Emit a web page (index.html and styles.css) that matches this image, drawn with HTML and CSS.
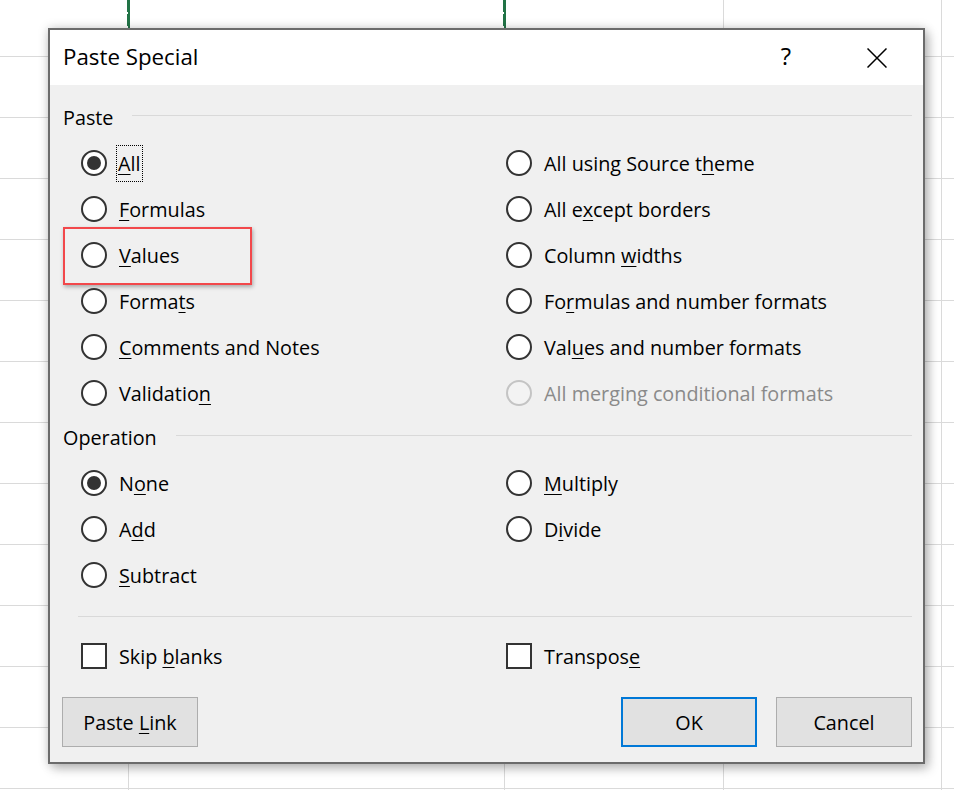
FILE: index.html
```html
<!DOCTYPE html>
<html lang="en">
<head>
<meta charset="utf-8">
<title>Paste Special</title>
<link rel="stylesheet" href="styles.css">
</head>
<body>
<div class="dialog">
  <div class="titlebar">
    <span class="title">Paste Special</span>
    <span class="help">?</span>
    <svg class="close" width="20" height="20" viewBox="0 0 20 20"><path d="M0.5 0.5 L19.5 19.5 M19.5 0.5 L0.5 19.5" stroke="#000" stroke-width="1.5" fill="none"/></svg>
  </div>
  <div class="content">
    <div class="group-head"><span>Paste</span><i class="rule"></i></div>
    <div class="options">
      <label class="opt"><span class="radio checked"></span><span class="focus"><u>A</u>ll</span></label>
      <label class="opt"><span class="radio"></span><span>All using Source t<u>h</u>eme</span></label>
      <label class="opt"><span class="radio"></span><span><u>F</u>ormulas</span></label>
      <label class="opt"><span class="radio"></span><span>All e<u>x</u>cept borders</span></label>
      <label class="opt highlight"><span class="radio"></span><span><u>V</u>alues</span></label>
      <label class="opt"><span class="radio"></span><span>Column <u>w</u>idths</span></label>
      <label class="opt"><span class="radio"></span><span>Forma<u>t</u>s</span></label>
      <label class="opt"><span class="radio"></span><span>Fo<u>r</u>mulas and number formats</span></label>
      <label class="opt"><span class="radio"></span><span><u>C</u>omments and Notes</span></label>
      <label class="opt"><span class="radio"></span><span>Val<u>u</u>es and number formats</span></label>
      <label class="opt"><span class="radio"></span><span>Validatio<u>n</u></span></label>
      <label class="opt disabled"><span class="radio"></span><span>All mer<u>g</u>ing conditional formats</span></label>
    </div>
    <div class="group-head op-head"><span>Operation</span><i class="rule"></i></div>
    <div class="options">
      <label class="opt"><span class="radio checked"></span><span>N<u>o</u>ne</span></label>
      <label class="opt"><span class="radio"></span><span><u>M</u>ultiply</span></label>
      <label class="opt"><span class="radio"></span><span>A<u>d</u>d</span></label>
      <label class="opt"><span class="radio"></span><span>D<u>i</u>vide</span></label>
      <label class="opt"><span class="radio"></span><span><u>S</u>ubtract</span></label>
    </div>
    <div class="separator"></div>
    <div class="options checks">
      <label class="opt"><span class="checkbox"></span><span>Skip <u>b</u>lanks</span></label>
      <label class="opt"><span class="checkbox"></span><span>Transpos<u>e</u></span></label>
    </div>
    <div class="buttons">
      <button class="btn">Paste <u>L</u>ink</button>
      <button class="btn primary">OK</button>
      <button class="btn">Cancel</button>
    </div>
  </div>
</div>
</body>
</html>
```
FILE: styles.css
```css
html, body {
  margin: 0;
  padding: 0;
}
body {
  width: 954px;
  height: 790px;
  overflow: hidden;
  box-sizing: border-box;
  padding: 28px 0 0 48px;
  font-family: "Open Sans", "Noto Sans", sans-serif;
  color: #000;
  background-color: #fff;
  background-image:
    repeating-linear-gradient(to bottom, #217346 0 12px, #ffffff 12px 14px),
    linear-gradient(#217346, #217346),
    repeating-linear-gradient(to bottom, #217346 0 12px, #ffffff 12px 14px),
    linear-gradient(#217346, #217346),
    linear-gradient(#dadada, #dadada),
    linear-gradient(#dadada, #dadada),
    linear-gradient(#dadada, #dadada),
    linear-gradient(#dadada, #dadada),
    linear-gradient(to bottom, #dadada 1px, transparent 1px);
  background-size:
    1px 56px,
    2px 56px,
    1px 56px,
    2px 56px,
    1px 100%,
    1px 100%,
    1px 100%,
    1px 100%,
    100% 61px;
  background-position:
    127px 0,
    128px 0,
    503px 0,
    504px 0,
    128px 0,
    504px 0,
    723px 0,
    941px 0,
    0 56px;
  background-repeat:
    no-repeat, no-repeat, no-repeat, no-repeat,
    no-repeat, no-repeat, no-repeat, no-repeat,
    repeat;
}

.dialog {
  width: 877px;
  height: 736px;
  box-sizing: border-box;
  border: 2px solid #6b6b6b;
  background: #f0f0f0;
  display: flex;
  flex-direction: column;
  box-shadow: 0 0 10px rgba(0, 0, 0, 0.18), 4px 5px 10px rgba(0, 0, 0, 0.22);
}

.titlebar {
  height: 55px;
  flex: none;
  background: #fff;
  display: flex;
  align-items: center;
  padding: 0 36px 0 13px;
}
.title {
  flex: 1;
  font-size: 22.3px;
  line-height: 1;
  padding-bottom: 1px;
}
.help {
  width: 30px;
  text-align: center;
  font-size: 24px;
  font-weight: 400;
  line-height: 1;
  margin-right: 66px;
  padding-bottom: 3px;
}
.close {
  display: block;
  flex: none;
}

.content {
  flex: 1;
  display: flex;
  flex-direction: column;
  padding: 15px 11px 15px 12px;
  font-size: 19.8px;
}

u {
  text-decoration-thickness: 1px;
  text-underline-offset: 3px;
}

.group-head {
  height: 34px;
  display: flex;
  align-items: center;
  padding-left: 1px;
}
.op-head {
  margin-top: 4px;
}
.rule {
  flex: 1;
  height: 1px;
  background: #d9d9d9;
  margin-left: 19px;
  margin-top: -4px;
}

.options {
  display: grid;
  grid-template-columns: 425px 1fr;
  grid-auto-rows: 46px;
  padding-left: 19px;
  margin-top: 6px;
}

.opt {
  display: flex;
  align-items: center;
  gap: 12px;
  position: relative;
  white-space: nowrap;
}

.radio {
  flex: none;
  width: 26px;
  height: 26px;
  box-sizing: border-box;
  border: 2px solid #333;
  border-radius: 50%;
  background: #fff;
  display: flex;
  align-items: center;
  justify-content: center;
}
.radio.checked::after {
  content: "";
  width: 14px;
  height: 14px;
  border-radius: 50%;
  background: #333;
}
.disabled {
  color: #8a8a8a;
}
.disabled .radio {
  border-color: #c4c4c4;
  background: #f3f3f3;
}

.focus {
  border: 1px dotted #000;
  height: 37px;
  line-height: 35px;
  box-sizing: border-box;
  padding: 0 1px;
  margin-left: -3px;
}

.highlight::after {
  content: "";
  position: absolute;
  left: -18px;
  top: -5px;
  width: 189px;
  height: 58px;
  box-sizing: border-box;
  border: 2px solid #f2484b;
  box-shadow: 1px 2px 4px rgba(0, 0, 0, 0.3);
}

.separator {
  height: 1px;
  background: #d9d9d9;
  margin: 18px 0 0 16px;
}

.checks {
  margin-top: 16px;
}
.checkbox {
  flex: none;
  width: 26px;
  height: 26px;
  box-sizing: border-box;
  border: 2px solid #333;
  background: #fff;
}

.buttons {
  display: flex;
  gap: 19px;
  margin-top: 18px;
}
.btn {
  width: 136px;
  height: 50px;
  box-sizing: border-box;
  border: 1px solid #adadad;
  background: #e1e1e1;
  font-family: inherit;
  font-size: 19.8px;
  color: #000;
  padding: 0;
}
.btn:first-child {
  margin-right: auto;
}
.btn.primary {
  border: 2px solid #0078d7;
}
```
